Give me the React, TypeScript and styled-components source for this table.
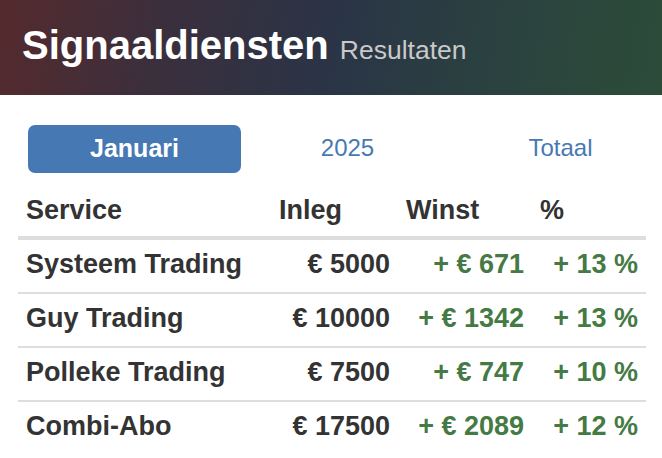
import React from "react";
import styled, { createGlobalStyle } from "styled-components";

const GlobalStyle = createGlobalStyle`
  html, body {
    margin: 0;
    padding: 0;
    background: #ffffff;
    overflow: hidden;
    font-family: "Liberation Sans", Arial, Helvetica, sans-serif;
  }
`;

const Page = styled.div`
  width: 662px;
  height: 458px;
  overflow: hidden;
  background: #fff;
`;

const Header = styled.header`
  height: 95px;
  box-sizing: border-box;
  padding: 0 0 0 22px;
  display: flex;
  align-items: flex-start;
  background: linear-gradient(100deg, #552a2d 0%, #3a2f3d 25%, #2a3446 50%, #2b4240 75%, #2c4c38 100%);
`;

const Title = styled.h1`
  margin: 0;
  padding-top: 21px;
  font-size: 40px;
  line-height: 48px;
  font-weight: bold;
  color: #ffffff;
  white-space: nowrap;
`;

const Subtitle = styled.small`
  font-size: 26.5px;
  font-weight: normal;
  color: #c9c9c9;
`;

const Content = styled.main`
  padding: 30px 16px 0 18px;
`;

const Tabs = styled.nav`
  display: grid;
  grid-template-columns: repeat(3, 213px);
  margin-left: 10px;
`;

const Tab = styled.div<{ $active?: boolean }>`
  height: 48px;
  box-sizing: border-box;
  padding-bottom: 2px;
  line-height: 46px;
  text-align: center;
  font-size: ${(p) => (p.$active ? "25px" : "24px")};
  border-radius: 7px;
  font-weight: ${(p) => (p.$active ? "bold" : "normal")};
  color: ${(p) => (p.$active ? "#ffffff" : "#4679b4")};
  background: ${(p) => (p.$active ? "#4679b4" : "transparent")};
`;

const Table = styled.table`
  margin-top: 13px;
  width: 628px;
  table-layout: fixed;
  border-collapse: collapse;
  font-size: 27px;
  color: #333333;
`;

const HeadCell = styled.th`
  text-align: left;
  font-weight: bold;
  line-height: 38px;
  padding: 5px 8px 7px;
  border-bottom: 4px solid #dddddd;
  white-space: nowrap;
`;

const Row = styled.tr`
  & + & td {
    border-top: 2px solid #dddddd;
  }
`;

const Cell = styled.td<{ $align?: "left" | "right"; $positive?: boolean }>`
  text-align: ${(p) => p.$align ?? "right"};
  font-weight: bold;
  line-height: 38px;
  padding: 5px 8px 9px;
  white-space: nowrap;
  color: ${(p) => (p.$positive ? "#457a44" : "#333333")};
`;

type Result = { service: string; inleg: number; winst: number; pct: number };

const results: Result[] = [
  { service: "Systeem Trading", inleg: 5000, winst: 671, pct: 13 },
  { service: "Guy Trading", inleg: 10000, winst: 1342, pct: 13 },
  { service: "Polleke Trading", inleg: 7500, winst: 747, pct: 10 },
  { service: "Combi-Abo", inleg: 17500, winst: 2089, pct: 12 },
];

export default function App() {
  return (
    <Page>
      <GlobalStyle />
      <Header>
        <Title>
          Signaaldiensten <Subtitle>Resultaten</Subtitle>
        </Title>
      </Header>
      <Content>
        <Tabs>
          <Tab $active>Januari</Tab>
          <Tab>2025</Tab>
          <Tab>Totaal</Tab>
        </Tabs>
        <Table>
          <colgroup>
            <col style={{ width: 253 }} />
            <col style={{ width: 127 }} />
            <col style={{ width: 134 }} />
            <col style={{ width: 114 }} />
          </colgroup>
          <thead>
            <tr>
              <HeadCell>Service</HeadCell>
              <HeadCell>Inleg</HeadCell>
              <HeadCell>Winst</HeadCell>
              <HeadCell>%</HeadCell>
            </tr>
          </thead>
          <tbody>
            {results.map((r) => (
              <Row key={r.service}>
                <Cell $align="left">{r.service}</Cell>
                <Cell>€ {r.inleg}</Cell>
                <Cell $positive>+ € {r.winst}</Cell>
                <Cell $positive>+ {r.pct} %</Cell>
              </Row>
            ))}
          </tbody>
        </Table>
      </Content>
    </Page>
  );
}
